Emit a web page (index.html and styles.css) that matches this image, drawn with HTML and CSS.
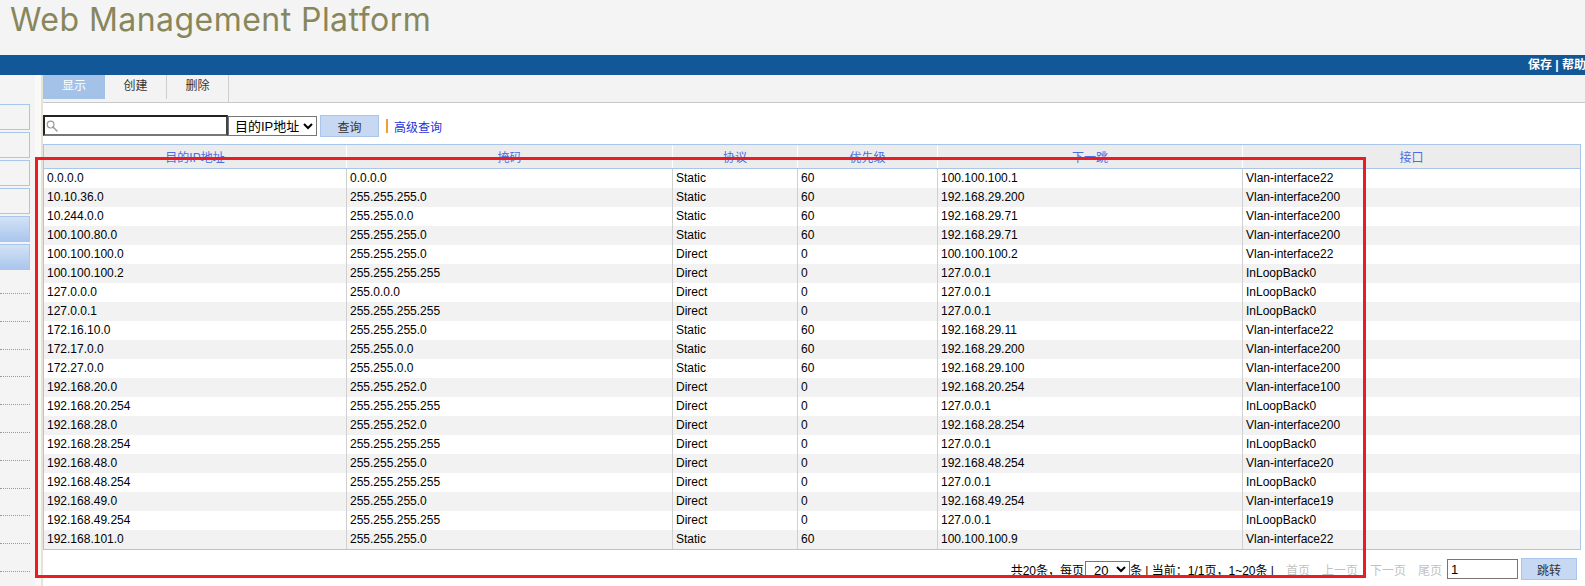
FILE: index.html
```html
<!DOCTYPE html>
<html lang="zh-CN">
<head>
<meta charset="utf-8">
<title>Web Management Platform</title>
<link rel="stylesheet" href="styles.css">
</head>
<body>
<header class="topbar"><h1 class="brand">Web Management Platform</h1></header>
<div class="menubar"><span class="menu-links">保存 | 帮助</span></div>
<div class="main">
  <aside class="sidebar">
    <div class="side-box"></div>
    <div class="side-box"></div>
    <div class="side-box"></div>
    <div class="side-box"></div>
    <div class="side-box active"></div>
    <div class="side-box active"></div>
    <ul class="side-list">
      <li></li><li></li><li></li><li></li><li></li><li></li><li></li><li></li><li></li><li></li><li></li>
    </ul>
  </aside>
  <div class="divider"></div>
  <section class="content">
    <nav class="tabs">
      <span class="tab active">显示</span>
      <span class="tab">创建</span>
      <span class="tab">删除</span>
    </nav>
    <div class="search">
      <span class="search-box">
        <svg class="search-icon" width="12" height="12" viewBox="0 0 12 12"><circle cx="4.6" cy="4.6" r="3.4" fill="none" stroke="#9a9a9a" stroke-width="1.2"/><path d="M7 7 L11 11" stroke="#9a9a9a" stroke-width="1.5" stroke-linecap="round"/></svg>
        <input class="search-input" type="text">
      </span>
      <select class="search-select"><option>目的IP地址</option></select>
      <button class="btn btn-query">查询</button>
      <span class="sep-bar"></span>
      <a class="adv-link">高级查询</a>
    </div>
    <div class="grid">
      <div class="row head"><span>目的IP地址</span><span>掩码</span><span>协议</span><span>优先级</span><span>下一跳</span><span>接口</span></div>
      <div class="row"><span>0.0.0.0</span><span>0.0.0.0</span><span>Static</span><span>60</span><span>100.100.100.1</span><span>Vlan-interface22</span></div>
      <div class="row"><span>10.10.36.0</span><span>255.255.255.0</span><span>Static</span><span>60</span><span>192.168.29.200</span><span>Vlan-interface200</span></div>
      <div class="row"><span>10.244.0.0</span><span>255.255.0.0</span><span>Static</span><span>60</span><span>192.168.29.71</span><span>Vlan-interface200</span></div>
      <div class="row"><span>100.100.80.0</span><span>255.255.255.0</span><span>Static</span><span>60</span><span>192.168.29.71</span><span>Vlan-interface200</span></div>
      <div class="row"><span>100.100.100.0</span><span>255.255.255.0</span><span>Direct</span><span>0</span><span>100.100.100.2</span><span>Vlan-interface22</span></div>
      <div class="row"><span>100.100.100.2</span><span>255.255.255.255</span><span>Direct</span><span>0</span><span>127.0.0.1</span><span>InLoopBack0</span></div>
      <div class="row"><span>127.0.0.0</span><span>255.0.0.0</span><span>Direct</span><span>0</span><span>127.0.0.1</span><span>InLoopBack0</span></div>
      <div class="row"><span>127.0.0.1</span><span>255.255.255.255</span><span>Direct</span><span>0</span><span>127.0.0.1</span><span>InLoopBack0</span></div>
      <div class="row"><span>172.16.10.0</span><span>255.255.255.0</span><span>Static</span><span>60</span><span>192.168.29.11</span><span>Vlan-interface22</span></div>
      <div class="row"><span>172.17.0.0</span><span>255.255.0.0</span><span>Static</span><span>60</span><span>192.168.29.200</span><span>Vlan-interface200</span></div>
      <div class="row"><span>172.27.0.0</span><span>255.255.0.0</span><span>Static</span><span>60</span><span>192.168.29.100</span><span>Vlan-interface200</span></div>
      <div class="row"><span>192.168.20.0</span><span>255.255.252.0</span><span>Direct</span><span>0</span><span>192.168.20.254</span><span>Vlan-interface100</span></div>
      <div class="row"><span>192.168.20.254</span><span>255.255.255.255</span><span>Direct</span><span>0</span><span>127.0.0.1</span><span>InLoopBack0</span></div>
      <div class="row"><span>192.168.28.0</span><span>255.255.252.0</span><span>Direct</span><span>0</span><span>192.168.28.254</span><span>Vlan-interface200</span></div>
      <div class="row"><span>192.168.28.254</span><span>255.255.255.255</span><span>Direct</span><span>0</span><span>127.0.0.1</span><span>InLoopBack0</span></div>
      <div class="row"><span>192.168.48.0</span><span>255.255.255.0</span><span>Direct</span><span>0</span><span>192.168.48.254</span><span>Vlan-interface20</span></div>
      <div class="row"><span>192.168.48.254</span><span>255.255.255.255</span><span>Direct</span><span>0</span><span>127.0.0.1</span><span>InLoopBack0</span></div>
      <div class="row"><span>192.168.49.0</span><span>255.255.255.0</span><span>Direct</span><span>0</span><span>192.168.49.254</span><span>Vlan-interface19</span></div>
      <div class="row"><span>192.168.49.254</span><span>255.255.255.255</span><span>Direct</span><span>0</span><span>127.0.0.1</span><span>InLoopBack0</span></div>
      <div class="row"><span>192.168.101.0</span><span>255.255.255.0</span><span>Static</span><span>60</span><span>100.100.100.9</span><span>Vlan-interface22</span></div>
    </div>
    <div class="pager">
      <span class="pg-text">共20条，每页</span>
      <select class="pg-select"><option>20</option></select>
      <span class="pg-text">条 | 当前：1/1页，1~20条 |</span>
      <span class="pg-link">首页</span>
      <span class="pg-link">上一页</span>
      <span class="pg-link">下一页</span>
      <span class="pg-link">尾页</span>
      <input class="pg-input" type="text" value="1">
      <button class="btn btn-jump">跳转</button>
    </div>
  </section>
</div>
<div class="annot"></div>
</body>
</html>
```

FILE: styles.css
```css
* { box-sizing: border-box; }
html, body { margin: 0; padding: 0; }
body {
  width: 1585px;
  height: 586px;
  overflow: hidden;
  position: relative;
  background: #f4f4f4;
  font-family: "Liberation Sans", "Noto Sans CJK SC", sans-serif;
  font-size: 12px;
  color: #000;
  display: flex;
  flex-direction: column;
}

.topbar { height: 55px; padding-left: 10px; }
.brand {
  margin: 0;
  font-family: Inter, "Open Sans", sans-serif;
  font-weight: 400;
  font-size: 32px;
  letter-spacing: 0.45px;
  line-height: normal;
  color: #88875b;
  white-space: nowrap;
}

.menubar {
  height: 20px;
  background: #125899;
  display: flex;
  justify-content: flex-end;
  align-items: center;
  overflow: hidden;
}
.menu-links {
  color: #fff;
  font-weight: bold;
  font-size: 12px;
  line-height: 20px;
  white-space: nowrap;
  margin-right: -1px;
}

.main { flex: 1; display: flex; min-height: 0; }

.sidebar {
  width: 35px;
  background: #f4f4f4;
  padding-top: 29px;
}
.side-box {
  width: 30px;
  height: 26px;
  margin-bottom: 2px;
  border: 1px solid #a9c7ea;
  border-left: none;
  background: #f4f4f4;
}
.side-box.active {
  background: linear-gradient(#d3e2f6, #aac6ec);
}
.side-list { list-style: none; margin: 0; padding: 0; }
.side-list li {
  width: 30px;
  height: 27.8px;
  border-bottom: 1px dotted #9a9a9a;
}
.side-list li:first-child { height: 22px; }

.divider {
  width: 8px;
  background: #f9f9f8;
  border-right: 2px solid #e7e3d6;
}

.content {
  flex: 1;
  background: #fff;
  display: flex;
  flex-direction: column;
}

.tabs {
  height: 28px;
  background: #f3f3f3;
  border-bottom: 1px solid #c9c9c9;
  display: flex;
  align-items: flex-start;
}
.tab {
  width: 62px;
  height: 24px;
  line-height: 22px;
  text-align: center;
  color: #333;
  border-right: 1px solid #cfcfcf;
}
.tab.active {
  background: #a4c1e8;
  color: #fff;
  border-right: none;
}
.tab:last-child { height: 27px; }

.search {
  margin-top: 12px;
  height: 22px;
  display: flex;
  align-items: center;
}
.search-box {
  align-self: flex-start;
  width: 185px;
  height: 21px;
  display: flex;
  align-items: center;
  border: 2px solid;
  border-color: #222 #444 #777 #222;
  background: #fff;
}
.search-icon { margin-left: 1px; flex: none; }
.search-input {
  flex: 1;
  min-width: 0;
  height: 100%;
  border: none;
  outline: none;
  padding: 0 2px;
  font: inherit;
}
.search-select {
  width: 89px;
  height: 20px;
  font-family: "Liberation Sans", "Noto Sans CJK SC", sans-serif;
  font-size: 13px;
  border: 1px solid #767676;
  border-radius: 0;
  background: #fff;
  color: #000;
  padding: 0 0 0 2px;
}
.btn {
  height: 22px;
  border: 1px solid #a9c5ea;
  background: #c6d8f2;
  color: #333;
  font-family: "Liberation Sans", "Noto Sans CJK SC", sans-serif;
  font-size: 12px;
  padding: 0;
}
.btn-query { width: 59px; margin-left: 3px; }
.sep-bar {
  width: 2px;
  height: 14px;
  background: #ee9f2c;
  margin-left: 7px;
}
.adv-link {
  margin-left: 6px;
  color: #1d33d6;
  cursor: pointer;
}

.grid {
  margin-top: 7px;
  margin-right: 4px;
  border: 1px solid #a9c6ea;
}
.row {
  display: grid;
  grid-template-columns: 302px 326px 125px 140px 305px 1fr;
  height: 19px;
  line-height: 19px;
  background: #fff;
}
.row:nth-child(odd) { background: #f2f2f2; }
.row > span {
  padding-left: 3px;
  border-left: 1px solid #d0d0d0;
  white-space: nowrap;
  overflow: hidden;
}
.row > span:first-child { border-left: none; }
.row.head {
  height: 24px;
  line-height: 19px;
  background: #ececec;
  border-bottom: 1px solid #a9c6ea;
}
.row.head > span {
  padding: 4px 0 0;
  text-align: center;
  color: #4b6ee2;
  border-left-color: #fff;
}

.pager {
  margin-top: 8px;
  height: 22px;
  margin-right: 4px;
  padding-right: 4px;
  display: flex;
  justify-content: flex-end;
  align-items: center;
  white-space: nowrap;
}
.pg-select {
  width: 45px;
  height: 17px;
  margin-left: 1px;
  font-family: "Liberation Sans", sans-serif;
  font-size: 13px;
  border: 1px solid #767676;
  border-radius: 0;
  background: #fff;
  padding: 0 0 0 4px;
}
.pg-link { color: #c2c2c2; margin-left: 12px; }
.pg-input {
  width: 71px;
  height: 20px;
  margin-left: 5px;
  border: 1px solid #767676;
  padding: 0 3px;
  font-family: "Liberation Sans", sans-serif;
  font-size: 13px;
}
.btn-jump { width: 56px; margin-left: 3px; }

.annot {
  position: absolute;
  left: 35px;
  top: 157px;
  width: 1331px;
  height: 421px;
  border: 3px solid #ec1c24;
  pointer-events: none;
}
```
